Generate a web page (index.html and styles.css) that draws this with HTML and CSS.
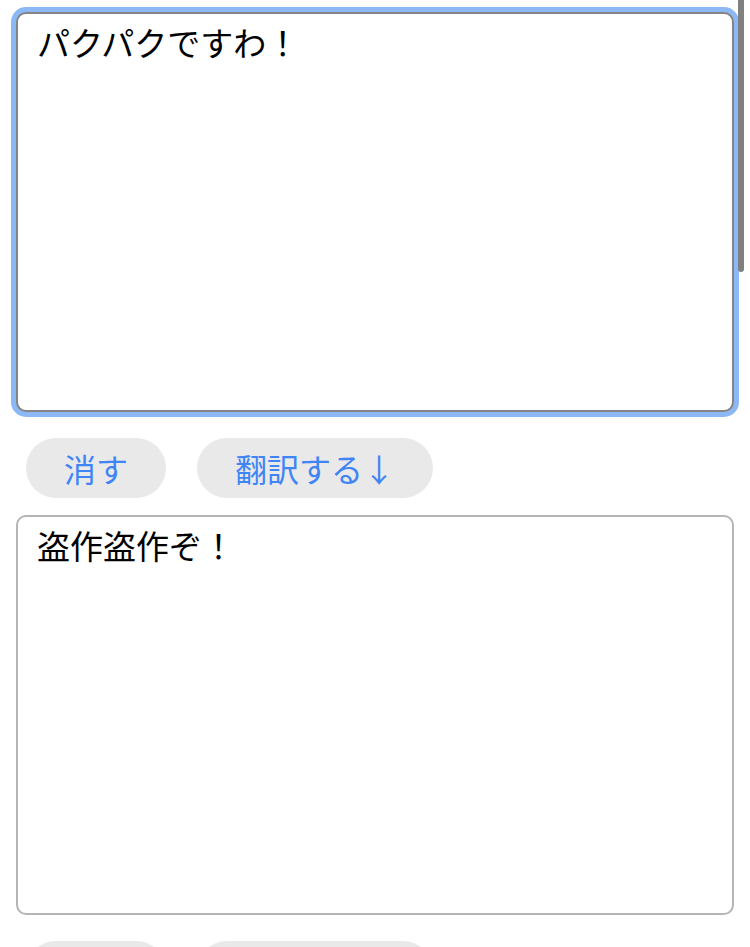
FILE: index.html
```html
<!DOCTYPE html>
<html lang="ja">
<head>
    <meta charset="UTF-8">
    <meta name="viewport" content="width=device-width, initial-scale=1.0">
    <title>翻訳</title>
    <link rel="stylesheet" href="styles.css">
</head>
<body>
    <textarea class="text-box focused" id="source">パクパクですわ！</textarea>
    <div class="button-row">
        <button class="pill">消す</button>
        <button class="pill">翻訳する↓</button>
    </div>
    <textarea class="text-box" id="result">盗作盗作ぞ！</textarea>
    <div class="button-row">
        <button class="pill">消す</button>
        <button class="pill">翻訳する↑</button>
    </div>

    <div class="scroll-indicator"></div>
</body>
</html>
```

FILE: styles.css
```css
html {
    scrollbar-width: none;
}

html::-webkit-scrollbar {
    display: none;
}

body {
    margin: 0;
    padding: 12px 16px;
    background-color: #fff;
    font-family: "Noto Sans CJK JP", "Noto Sans", sans-serif;
}

.text-box {
    display: block;
    width: 100%;
    height: 400px;
    box-sizing: border-box;
    margin: 0;
    padding: 4px 19px;
    border: 2px solid #b5b5b5;
    border-radius: 10px;
    font-family: "Noto Sans CJK JP", "Noto Sans", sans-serif;
    font-size: 33px;
    color: #000;
    background: #fff;
    resize: none;
    outline: none;
}

.text-box.focused {
    border-color: #848484;
    box-shadow: 0 0 0 5px #8cb9f6;
}

.button-row {
    display: flex;
    gap: 31px;
    margin: 26px 0 17px;
    padding-left: 10px;
}

.pill {
    height: 60px;
    padding: 0 38px;
    border: none;
    border-radius: 30px;
    background-color: #e9e9e9;
    color: #3f85f5;
    font-family: "Noto Sans CJK JP", "Noto Sans", sans-serif;
    font-size: 32px;
    cursor: pointer;
}

/* overlay scroll thumb like the phone shows */
.scroll-indicator {
    position: fixed;
    top: 0;
    right: 6px;
    width: 6px;
    height: 272px;
    background-color: #808080;
    border-radius: 0 0 3px 3px;
}
```
